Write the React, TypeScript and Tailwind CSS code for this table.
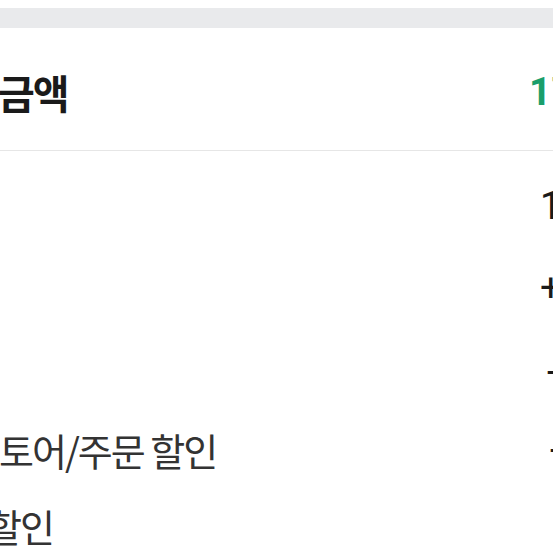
import React from 'react';

interface Row {
  label: string;
  value: string;
  height: string;
  labelOffset: string;
  valueStart: string;
}

const rows: Row[] = [
  { label: '', value: '13,900원', height: 'h-[80px]', labelOffset: 'ml-0', valueStart: 'w-[540px]' },
  { label: '', value: '+3,000원', height: 'h-[84px]', labelOffset: 'ml-0', valueStart: 'w-[540px]' },
  { label: '', value: '-2,000원', height: 'h-[82px]', labelOffset: 'ml-0', valueStart: 'w-[547px]' },
  { label: '토어/주문 할인', value: '-1,000원', height: 'h-[74px]', labelOffset: 'ml-[-1px]', valueStart: 'w-[550px]' },
  { label: '할인', value: '-0원', height: 'h-[78px]', labelOffset: 'ml-[-13px]', valueStart: 'w-[560px]' },
];

export default function App() {
  return (
    <div className="w-[553px] h-[553px] overflow-hidden bg-white font-['Noto_Sans_CJK_KR','Noto_Sans',sans-serif]">
      <div className="h-[8px] bg-white" />
      <div className="h-[20px] bg-[#e9eaec]" />

      <div className="h-[123px] flex items-center pt-[6px] border-b border-[#e6e6e6] whitespace-nowrap">
        <div className="w-[529px] shrink-0">
          <span className="ml-[-2px] text-[40px] font-bold tracking-[-2px] text-[#1a1a1a]">금액</span>
        </div>
        <span className="font-['Roboto','Noto_Sans_CJK_KR',sans-serif] text-[39px] font-bold text-[#1a9e6b]">17,900원</span>
      </div>

      <div className="pt-[15px]">
        {rows.map((r, i) => (
          <div key={i} className={`${r.height} flex items-center whitespace-nowrap`}>
            <div className={`${r.valueStart} shrink-0`}>
              <span className={`${r.labelOffset} block text-[38px] tracking-[-2px] text-[#333333]`}>{r.label}</span>
            </div>
            <span className="font-['Roboto','Noto_Sans_CJK_KR',sans-serif] text-[38px] text-[#1a1a1a]">{r.value}</span>
          </div>
        ))}
      </div>
    </div>
  );
}
